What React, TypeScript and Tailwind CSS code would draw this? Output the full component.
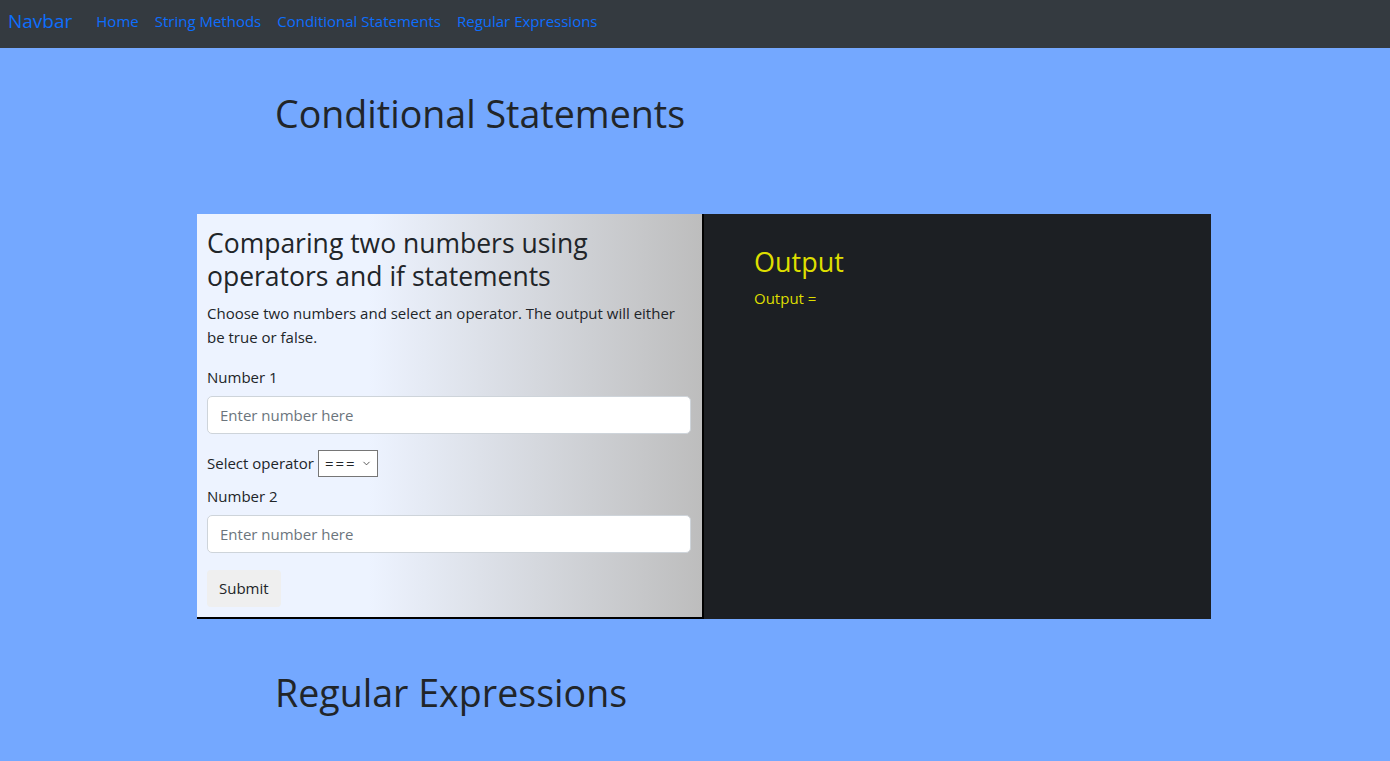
import { ChevronDown } from 'lucide-react';

const font = { fontFamily: '"Open Sans", "Noto Sans", sans-serif' };

export default function App() {
  return (
    <div className="min-h-[761px] bg-[#74a8ff] text-[#212529] overflow-hidden" style={font}>
      {/* Navbar */}
      <nav className="h-[48px] bg-[#343a40] flex items-center px-2 pb-[5px]">
        <span className="text-[19px] text-[#0d6efd] mr-[24px]">Navbar</span>
        <div className="flex items-center gap-[16px] text-[15px] text-[#0d6efd]">
          <a>Home</a>
          <a>String Methods</a>
          <a>Conditional Statements</a>
          <a>Regular Expressions</a>
        </div>
      </nav>

      <h1 className="ml-[275px] mt-[42px] text-[37.6px] leading-[48px]">Conditional Statements</h1>

      <div className="ml-[197px] mt-[76px] w-[1014px] flex">
        <div className="w-[507px] border-r-2 border-b-2 border-black bg-[linear-gradient(to_right,#edf3ff_34%,#bdbdbd_100%)] px-[10px] pt-[13px] pb-[10px]">
          <h3 className="text-[26.5px] leading-[33px] pr-[60px]">Comparing two numbers using operators and if statements</h3>
          <p className="text-[15px] leading-[24px] mt-[8px]">
            Choose two numbers and select an operator. The output will either be true or false.
          </p>
          <div className="text-[15px] mt-[16px] leading-[24px]">Number 1</div>
          <input
            placeholder="Enter number here"
            className="mt-[7px] w-[484px] h-[38px] bg-white border border-[#ced4da] rounded-[5px] px-[12px] text-[15px] placeholder:text-[#6c757d] outline-none"
          />
          <div className="flex items-center mt-[16px] text-[15px]">
            <span>Select operator</span>
            <div className="ml-[4px] w-[60px] h-[27px] border border-[#767676] bg-white flex items-center justify-between pl-[6px] pr-[5px]">
              <span className="text-[15px] tracking-[2px]">===</span>
              <ChevronDown size={11} strokeWidth={1.75} className="text-[#333]" />
            </div>
          </div>
          <div className="text-[15px] mt-[7px] leading-[24px]">Number 2</div>
          <input
            placeholder="Enter number here"
            className="mt-[7px] w-[484px] h-[38px] bg-white border border-[#ced4da] rounded-[5px] px-[12px] text-[15px] placeholder:text-[#6c757d] outline-none"
          />
          <button className="mt-[17px] h-[37px] px-[12px] bg-[#efefef] rounded-[4px] text-[15px]">Submit</button>
        </div>
        <div className="flex-1 bg-[#1c1f23] pl-[50px] pt-[31px]">
          <h3 className="text-[27px] leading-[34px] text-[#dede00]">Output</h3>
          <p className="text-[15px] text-[#dede00] mt-[8px]">Output =</p>
        </div>
      </div>

      <h1 className="ml-[275px] mt-[50px] text-[37.6px] leading-[48px]">Regular Expressions</h1>
    </div>
  );
}
